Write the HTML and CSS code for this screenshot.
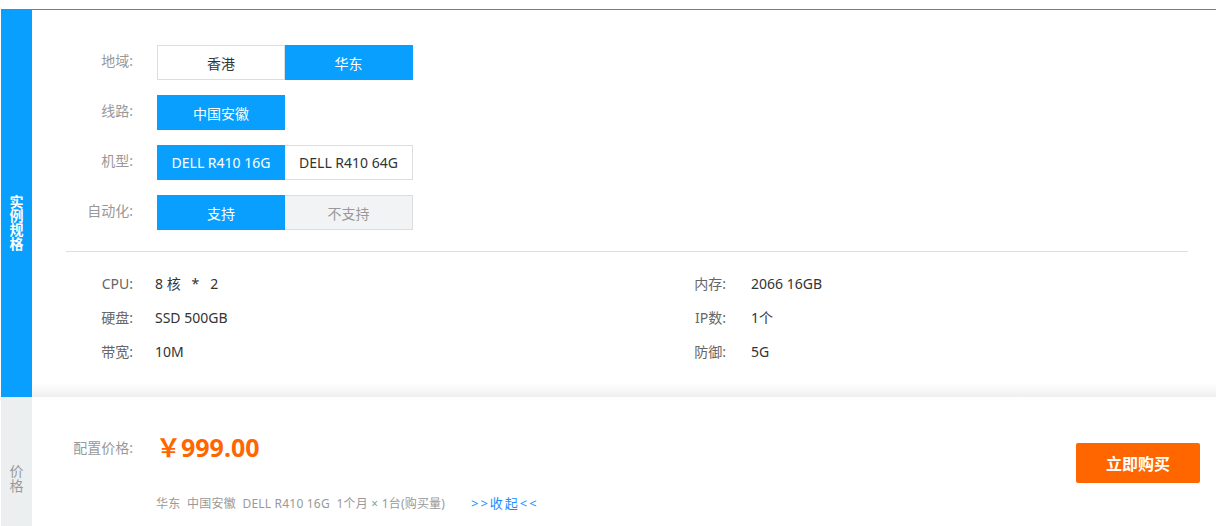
FILE: index.html
```html
<!DOCTYPE html>
<html lang="zh-CN">
<head>
<meta charset="utf-8">
<title>实例规格</title>
<link rel="stylesheet" href="styles.css">
</head>
<body>
<div class="page">
  <div class="panel">
    <section class="sec sec-spec">
      <div class="side side-blue"><span class="side-text">实例规格</span></div>
      <div class="content">
        <div class="form">
          <div class="row">
            <div class="label">地域:</div>
            <div class="opts">
              <span class="opt">香港</span>
              <span class="opt on">华东</span>
            </div>
          </div>
          <div class="row">
            <div class="label">线路:</div>
            <div class="opts">
              <span class="opt on">中国安徽</span>
            </div>
          </div>
          <div class="row">
            <div class="label">机型:</div>
            <div class="opts">
              <span class="opt on">DELL R410 16G</span>
              <span class="opt">DELL R410 64G</span>
            </div>
          </div>
          <div class="row">
            <div class="label">自动化:</div>
            <div class="opts">
              <span class="opt on">支持</span>
              <span class="opt off">不支持</span>
            </div>
          </div>
        </div>
        <div class="divider"></div>
        <div class="specs">
          <div class="spec"><span class="slabel">CPU:</span><span class="sval">8 核 &nbsp;&nbsp;* &nbsp;&nbsp;2</span></div>
          <div class="spec"><span class="slabel">内存:</span><span class="sval">2066 16GB</span></div>
          <div class="spec"><span class="slabel">硬盘:</span><span class="sval">SSD 500GB</span></div>
          <div class="spec"><span class="slabel">IP数:</span><span class="sval">1个</span></div>
          <div class="spec"><span class="slabel">带宽:</span><span class="sval">10M</span></div>
          <div class="spec"><span class="slabel">防御:</span><span class="sval">5G</span></div>
        </div>
      </div>
    </section>
    <section class="sec sec-price">
      <div class="side side-grey"><span class="side-text">价格</span></div>
      <div class="content price-content">
        <div class="price-row">
          <div class="plabel">配置价格:</div>
          <div class="price">￥999.00</div>
          <button class="buy" type="button">立即购买</button>
        </div>
        <div class="summary">
          <span class="sum-text">华东&nbsp;&nbsp;中国安徽&nbsp;&nbsp;DELL R410 16G&nbsp;&nbsp;1个月 × 1台(购买量)</span>
          <a class="toggle" href="#">&gt;&gt;收起&lt;&lt;</a>
        </div>
      </div>
    </section>
  </div>
</div>
</body>
</html>
```
FILE: styles.css
```css
html, body {
  margin: 0;
  padding: 0;
  background: #fff;
}
body {
  font-family: "Noto Sans", "Noto Sans CJK SC", sans-serif;
  color: #333;
  font-size: 14px;
}
.page {
  padding: 9px 0 0 1px;
}
.panel {
  border-top: 1px solid #1b98ec;
}
.sec {
  display: flex;
}
.side {
  width: 31px;
  flex: none;
  display: flex;
  justify-content: center;
}
.side-text {
  width: 14px;
  word-break: break-all;
  text-align: center;
}
.side-blue {
  background: #089ffe;
  color: #fff;
  align-items: center;
  padding-top: 38px;
  box-sizing: border-box;
}
.side-blue .side-text {
  font-size: 14px;
  line-height: 14px;
  font-weight: 700;
}
.side-grey {
  background: #eceff0;
  color: #999;
  align-items: flex-start;
  padding-top: 66px;
  box-sizing: border-box;
}
.side-grey .side-text {
  font-size: 14px;
  line-height: 15px;
}
.content {
  flex: 1;
}
.sec-spec .content {
  height: 387px;
  box-sizing: border-box;
  padding-top: 35px;
  background: linear-gradient(to bottom, #fff 0, #fff calc(100% - 14px), #efefef 100%);
}
.form {
  display: flex;
  flex-direction: column;
  gap: 15px;
}
.row {
  display: flex;
  align-items: center;
}
.label {
  width: 101px;
  text-align: right;
  color: #999;
  font-size: 14px;
  margin-right: 24px;
  position: relative;
  top: -3px;
}
.opts {
  display: flex;
}
.opt {
  width: 128px;
  height: 35px;
  box-sizing: border-box;
  border: 1px solid #ddd;
  display: flex;
  align-items: center;
  justify-content: center;
  font-size: 14px;
  color: #333;
  background: #fff;
}
.opt + .opt {
  border-left: none;
}
.opt.on {
  background: #089ffe;
  border-color: #089ffe;
  color: #fff;
}
.opt.off {
  background: #f2f3f5;
  color: #999;
}
.divider {
  height: 1px;
  background: #dedede;
  margin: 21px 28px 0 34px;
}
.specs {
  display: grid;
  grid-template-columns: 593px 1fr;
  padding-top: 14px;
}
.spec {
  display: flex;
  align-items: center;
  height: 34px;
}
.slabel {
  width: 101px;
  text-align: right;
  color: #666;
  margin-right: 22px;
}
.spec:nth-child(2n) .slabel {
  margin-right: 25px;
}
.sval {
  color: #333;
}
.price-content {
  height: 129px;
  box-sizing: border-box;
  padding-top: 30px;
}
.price-row {
  display: flex;
  align-items: center;
}
.plabel {
  width: 101px;
  text-align: right;
  color: #999;
  font-size: 14px;
  margin-right: 26px;
}
.price {
  color: #ff6600;
  font-size: 25px;
  font-weight: 700;
  flex: 1;
  position: relative;
  top: -1px;
  margin-left: -3px;
}
.buy {
  width: 124px;
  height: 40px;
  border: none;
  border-radius: 2px;
  background: #ff6600;
  color: #fff;
  font-family: inherit;
  font-size: 16px;
  font-weight: 700;
  margin-right: 16px;
  position: relative;
  top: 16px;
  cursor: pointer;
}
.summary {
  margin: 26px 0 0 124px;
  font-size: 12px;
  display: flex;
  align-items: center;
}
.sum-text {
  color: #999;
  width: 315px;
  letter-spacing: 0.2px;
}
.toggle {
  color: #1a8cff;
  text-decoration: none;
  font-size: 13px;
  letter-spacing: 2px;
}
```
